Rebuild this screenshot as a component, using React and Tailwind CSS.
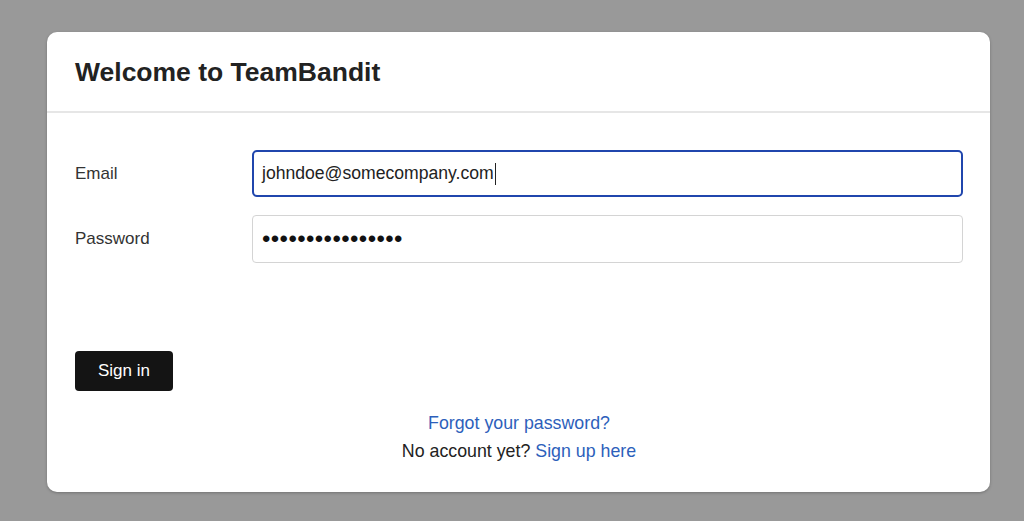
export default function App() {
  const font = { fontFamily: '"Liberation Sans", Arial, Helvetica, sans-serif' };
  return (
    <div className="w-[1024px] h-[521px] bg-[#999999] pt-[32px] pl-[47px]" style={font}>
      <div className="w-[943px] h-[460px] bg-white rounded-[10px] shadow-[0_1px_3px_rgba(0,0,0,0.25)] flex flex-col">
        <div className="h-[81px] border-b-2 border-[#e6e6e6] flex items-center px-[28px] pt-[1px]">
          <h1 className="text-[26.5px] font-bold text-[#222] leading-none">Welcome to TeamBandit</h1>
        </div>
        <div className="px-[27px] pl-[28px] pt-[37px] flex flex-col">
          <div className="flex flex-col gap-[18px]">
            <div className="flex items-center">
              <label className="w-[177px] text-[17px] text-[#333]">Email</label>
              <div className="flex-1 h-[47px] border-2 border-[#2046ad] rounded-[5px] flex items-center px-[8px] text-[17.6px] text-[#222]">
                <span>johndoe@somecompany.com</span>
                <span className="w-[1px] h-[22px] bg-[#222] ml-[1px]"></span>
              </div>
            </div>
            <div className="flex items-center">
              <label className="w-[177px] text-[17px] text-[#333]">Password</label>
              <div className="flex-1 h-[48px] border border-[#d4d4d4] rounded-[4px] flex items-center px-[9px] text-[24px] text-[#111] tracking-[0.4px] leading-none">
                ••••••••••••••••
              </div>
            </div>
          </div>
          <div className="mt-[88px]">
            <button className="w-[98px] h-[40px] bg-[#141414] text-white text-[17px] rounded-[4px]">Sign in</button>
          </div>
          <div className="mt-[18px] flex flex-col items-center text-[17.8px] leading-[28px] text-[#222]">
            <a className="text-[#2d5fbb]">Forgot your password?</a>
            <div>
              No account yet? <a className="text-[#2d5fbb]">Sign up here</a>
            </div>
          </div>
        </div>
      </div>
    </div>
  );
}
